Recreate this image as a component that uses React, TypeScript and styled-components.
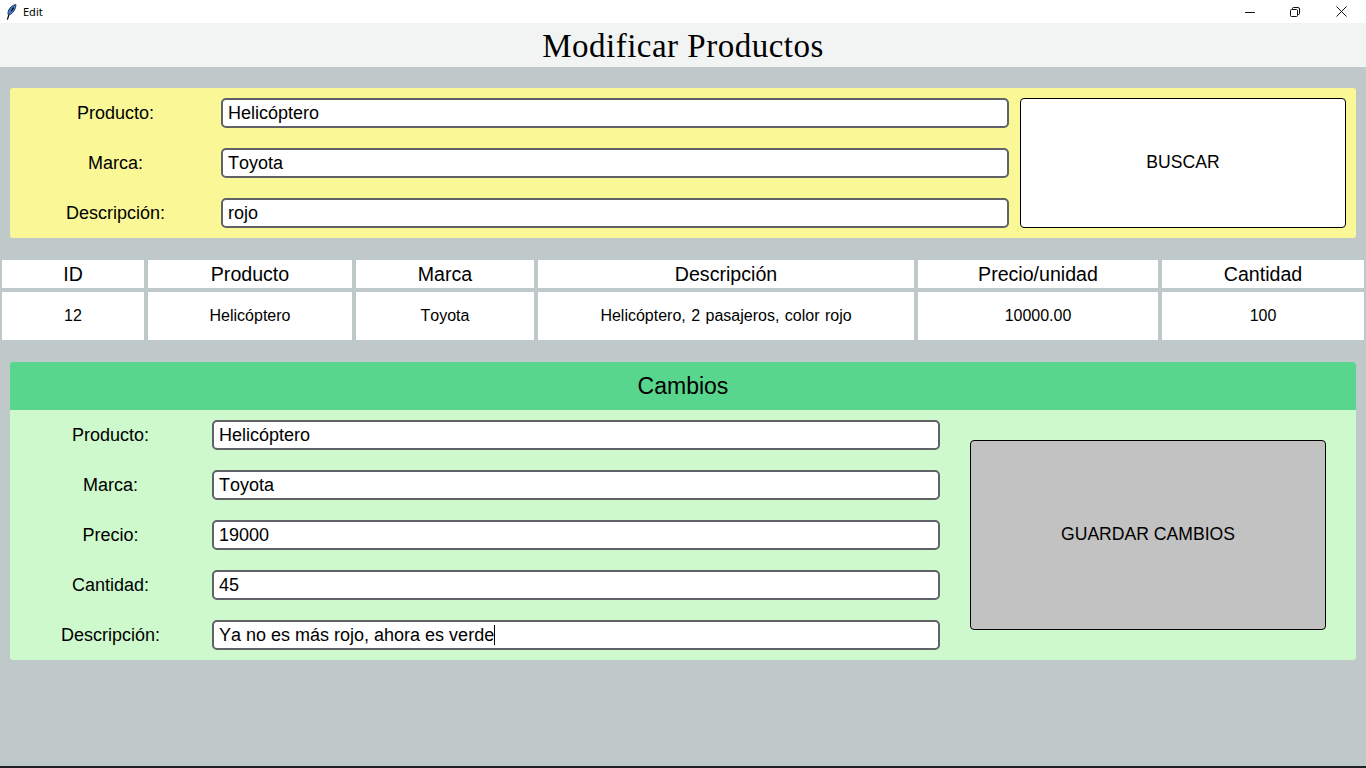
import React from "react";
import styled, { createGlobalStyle } from "styled-components";

const Global = createGlobalStyle`
  html, body { margin: 0; padding: 0; height: 100%; overflow: hidden; }
  body { font-family: "Liberation Sans", Arial, sans-serif; color: #000; font-kerning: none; }
`;

const Page = styled.div`
  width: 1366px;
  height: 768px;
  background: #bfc9ca;
  display: flex;
  flex-direction: column;
  box-sizing: border-box;
  border-bottom: 2px solid #222;
`;

const TitleBar = styled.div`
  height: 23px;
  flex: none;
  background: #fff;
  display: flex;
  align-items: center;
  padding: 0 1px 0 6px;
  font-family: "Noto Sans", "Open Sans", sans-serif;
  font-size: 11px;
`;

const AppName = styled.span`
  margin-left: 6px;
  flex: 1;
`;

const WinButton = styled.span<{ $w: number }>`
  width: ${(p) => p.$w}px;
  height: 23px;
  display: flex;
  align-items: center;
  justify-content: center;
`;

const Header = styled.h1`
  margin: 0;
  height: 44px;
  flex: none;
  background: #f2f4f3;
  text-align: center;
  font-family: "Liberation Serif", serif;
  font-weight: 400;
  font-size: 33px;
  line-height: 46px;
  letter-spacing: 0.5px;
`;

const SearchPanel = styled.section`
  margin: 21px 10px 0;
  height: 150px;
  box-sizing: border-box;
  padding: 10px;
  background: #f9f796;
  border-radius: 3px;
  display: grid;
  grid-template-columns: 989px 326px;
`;

const Fields = styled.div`
  display: flex;
  flex-direction: column;
  gap: 20px;
`;

const FieldRow = styled.div<{ $label: number }>`
  display: grid;
  grid-template-columns: ${(p) => p.$label}px 1fr;
  height: 30px;
  align-items: center;
`;

const Label = styled.label<{ $pad: number }>`
  font-size: 18px;
  text-align: center;
  padding-right: ${(p) => p.$pad}px;
`;

const Field = styled.div`
  height: 30px;
  box-sizing: border-box;
  border: 2px solid #5f6368;
  border-radius: 5px;
  background: #fff;
  padding-left: 5px;
  font-size: 18px;
  line-height: 26px;
  white-space: nowrap;
  display: flex;
  align-items: center;
`;

const Caret = styled.span`
  display: inline-block;
  width: 1px;
  height: 20px;
  background: #000;
`;

const ActionButton = styled.button<{ $bg: string }>`
  border: 1px solid #000;
  border-radius: 4px;
  background: ${(p) => p.$bg};
  font-family: inherit;
  font-kerning: none;
  font-size: 17.6px;
  color: #000;
  padding: 0 0 2px;
`;

const SearchButton = styled(ActionButton)`
  margin-left: 11px;
  width: 326px;
  height: 130px;
`;

const Table = styled.div`
  margin: 22px 2px 0;
  display: grid;
  grid-template-columns: 142px 204px 178px 376px 240px 202px;
  column-gap: 4px;
  row-gap: 4px;
  grid-template-rows: 28px 48px;
`;

const HeadCell = styled.div`
  background: #fff;
  text-align: center;
  font-size: 19.6px;
  line-height: 28px;
`;

const BodyCell = styled.div`
  background: #fff;
  text-align: center;
  font-size: 16px;
  word-spacing: 1px;
  line-height: 47px;
`;

const ChangesPanel = styled.section`
  margin: 22px 10px 0;
  height: 298px;
  background: #cef9cd;
  border-radius: 3px;
  display: flex;
  flex-direction: column;
  overflow: hidden;
`;

const ChangesHead = styled.h2`
  margin: 0;
  height: 48px;
  background: #58d68d;
  text-align: center;
  font-weight: 400;
  font-size: 23px;
  line-height: 48px;
`;

const ChangesBody = styled.div`
  display: flex;
  padding: 10px 30px 10px 0;
  justify-content: space-between;
`;

const ChangesFields = styled(Fields)`
  width: 930px;
`;

const SaveButton = styled(ActionButton)`
  width: 356px;
  height: 190px;
  margin-top: 20px;
`;

const Feather = () => (
  <svg width="11" height="16" viewBox="0 0 11 16">
    <path d="M10 .6 C6.5 1 2.6 4 2 8.5 L2.2 11 L4.6 10.4 C7.6 8.2 9.8 5 10 .6Z" fill="#3b78c8" stroke="#22324c" strokeWidth="0.9" />
    <path d="M7.6 3.6 L5.4 7 M2.8 11 L1.4 15.6" stroke="#000" strokeWidth="1.2" fill="none" />
  </svg>
);

const searchFields = [
  ["Producto:", "Helicóptero"],
  ["Marca:", "Toyota"],
  ["Descripción:", "rojo"],
];

const changeFields = [
  ["Producto:", "Helicóptero"],
  ["Marca:", "Toyota"],
  ["Precio:", "19000"],
  ["Cantidad:", "45"],
  ["Descripción:", "Ya no es más rojo, ahora es verde"],
];

const heads = ["ID", "Producto", "Marca", "Descripción", "Precio/unidad", "Cantidad"];
const row = ["12", "Helicóptero", "Toyota", "Helicóptero, 2 pasajeros, color rojo", "10000.00", "100"];

export default function App() {
  return (
    <Page>
      <Global />
      <TitleBar>
        <Feather />
        <AppName>Edit</AppName>
        <WinButton $w={44}>
          <svg width="10" height="10" viewBox="0 0 10 10"><path d="M0 5.5H10" stroke="#111" /></svg>
        </WinButton>
        <WinButton $w={46}>
          <svg width="10" height="10" viewBox="0 0 10 10" fill="none" stroke="#111">
            <rect x="0.5" y="2.5" width="7" height="7" rx="1" />
            <path d="M2.5 2.5V1.5a1 1 0 0 1 1-1H8a1.5 1.5 0 0 1 1.5 1.5V6.5a1 1 0 0 1-1 1H7.5" />
          </svg>
        </WinButton>
        <WinButton $w={47}>
          <svg width="11" height="11" viewBox="0 0 11 11"><path d="M.5.5l10 10M10.5.5l-10 10" stroke="#111" /></svg>
        </WinButton>
      </TitleBar>
      <Header>Modificar Productos</Header>
      <SearchPanel>
        <Fields>
          {searchFields.map(([l, v]) => (
            <FieldRow key={l} $label={201}>
              <Label $pad={10}>{l}</Label>
              <Field>{v}</Field>
            </FieldRow>
          ))}
        </Fields>
        <SearchButton $bg="#fff">BUSCAR</SearchButton>
      </SearchPanel>
      <Table>
        {heads.map((h) => <HeadCell key={h}>{h}</HeadCell>)}
        {row.map((c) => <BodyCell key={c}>{c}</BodyCell>)}
      </Table>
      <ChangesPanel>
        <ChangesHead>Cambios</ChangesHead>
        <ChangesBody>
          <ChangesFields>
            {changeFields.map(([l, v], i) => (
              <FieldRow key={l} $label={202}>
                <Label $pad={1}>{l}</Label>
                <Field>{v}{i === 4 && <Caret />}</Field>
              </FieldRow>
            ))}
          </ChangesFields>
          <SaveButton $bg="#c2c2c2">GUARDAR CAMBIOS</SaveButton>
        </ChangesBody>
      </ChangesPanel>
    </Page>
  );
}
